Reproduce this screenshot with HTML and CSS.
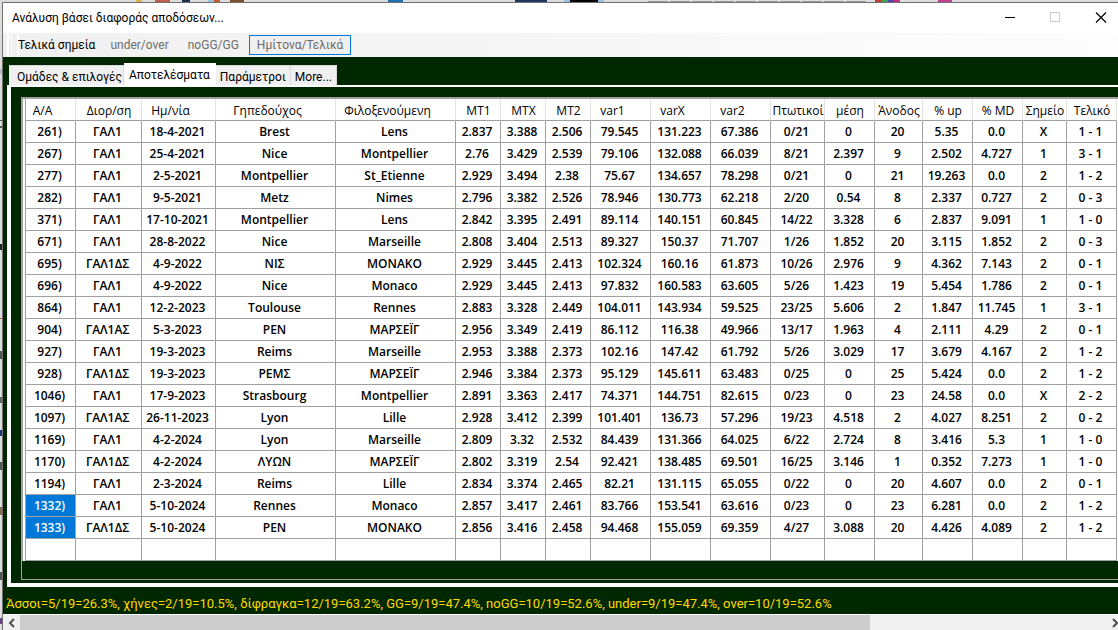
FILE: index.html
```html
<!DOCTYPE html>
<html lang="el">
<head>
<meta charset="utf-8">
<title>Ανάλυση βάσει διαφοράς αποδόσεων...</title>
<link rel="stylesheet" href="styles.css">
</head>
<body>
<div class="backdrop">
<main class="window">
  <header class="titlebar">
    <h1 class="title">Ανάλυση βάσει διαφοράς αποδόσεων...</h1>
    <div class="controls">
      <button class="control" aria-label="Ελαχιστοποίηση"><svg width="12" height="12" viewBox="0 0 12 12" shape-rendering="crispEdges"><path d="M0 5.500h10" stroke="#000"/></svg></button>
      <button class="control" aria-label="Μεγιστοποίηση" disabled><svg width="12" height="12" viewBox="0 0 12 12" shape-rendering="crispEdges"><path d="M0.500 0.500h9v9h-9z" fill="none" stroke="#ccc"/></svg></button>
      <button class="control" aria-label="Κλείσιμο"><svg width="12" height="12" viewBox="0 0 12 12"><path d="M1 0.500l10 10M11 0.500L1 10.500" stroke="#000" stroke-width="1.200"/></svg></button>
    </div>
  </header>
  <nav class="toolbar">
    <button class="tool tool-ready">Τελικά σημεία</button>
    <button class="tool">under/over</button>
    <button class="tool">noGG/GG</button>
    <button class="tool tool-active">Ημίτονα/Τελικά</button>
  </nav>
  <div class="tabs" role="tablist">
    <button class="tab" role="tab">Ομάδες &amp; επιλογές</button>
    <button class="tab tab-selected" role="tab" aria-selected="true">Αποτελέσματα</button>
    <button class="tab" role="tab">Παράμετροι</button>
    <button class="tab" role="tab">More...</button>
  </div>
  <section class="panel">
    <div class="grid">
      <div class="sheet">
      <table class="results">
        <colgroup><col class="w50"><col class="w66"><col class="w74"><col class="w120" span="2"><col class="w45" span="3"><col class="w60" span="3"><col class="w54"><col class="w50"><col class="w48"><col class="w50" span="2"><col class="w44"><col class="w50"></colgroup>
        <thead>
        <tr><th class="sortable">Α/Α<th>Διορ/ση<th class="sortable">Ημ/νία<th class="sortable">Γηπεδούχος<th class="sortable">Φιλοξενούμενη<th>MT1<th>MTX<th>MT2<th class="sortable">var1<th class="sortable">varX<th class="sortable">var2<th>Πτωτικοί<th>μέση<th>Άνοδος<th>% up<th>% MD<th>Σημείο<th>Τελικό
        </thead>
        <tbody>
        <tr><td>261)<td>ΓΑΛ1<td>18-4-2021<td>Brest<td>Lens<td>2.837<td>3.388<td>2.506<td>79.545<td>131.223<td>67.386<td>0/21<td>0<td>20<td>5.35<td>0.0<td>X<td>1 - 1
        <tr><td>267)<td>ΓΑΛ1<td>25-4-2021<td>Nice<td>Montpellier<td>2.76<td>3.429<td>2.539<td>79.106<td>132.088<td>66.039<td>8/21<td>2.397<td>9<td>2.502<td>4.727<td>1<td>3 - 1
        <tr><td>277)<td>ΓΑΛ1<td>2-5-2021<td>Montpellier<td>St_Etienne<td>2.929<td>3.494<td>2.38<td>75.67<td>134.657<td>78.298<td>0/21<td>0<td>21<td>19.263<td>0.0<td>2<td>1 - 2
        <tr><td>282)<td>ΓΑΛ1<td>9-5-2021<td>Metz<td>Nimes<td>2.796<td>3.382<td>2.526<td>78.946<td>130.773<td>62.218<td>2/20<td>0.54<td>8<td>2.337<td>0.727<td>2<td>0 - 3
        <tr><td>371)<td>ΓΑΛ1<td>17-10-2021<td>Montpellier<td>Lens<td>2.842<td>3.395<td>2.491<td>89.114<td>140.151<td>60.845<td>14/22<td>3.328<td>6<td>2.837<td>9.091<td>1<td>1 - 0
        <tr><td>671)<td>ΓΑΛ1<td>28-8-2022<td>Nice<td>Marseille<td>2.808<td>3.404<td>2.513<td>89.327<td>150.37<td>71.707<td>1/26<td>1.852<td>20<td>3.115<td>1.852<td>2<td>0 - 3
        <tr><td>695)<td>ΓΑΛ1ΔΣ<td>4-9-2022<td>ΝΙΣ<td>ΜΟΝΑΚΟ<td>2.929<td>3.445<td>2.413<td>102.324<td>160.16<td>61.873<td>10/26<td>2.976<td>9<td>4.362<td>7.143<td>2<td>0 - 1
        <tr><td>696)<td>ΓΑΛ1<td>4-9-2022<td>Nice<td>Monaco<td>2.929<td>3.445<td>2.413<td>97.832<td>160.583<td>63.605<td>5/26<td>1.423<td>19<td>5.454<td>1.786<td>2<td>0 - 1
        <tr><td>864)<td>ΓΑΛ1<td>12-2-2023<td>Toulouse<td>Rennes<td>2.883<td>3.328<td>2.449<td>104.011<td>143.934<td>59.525<td>23/25<td>5.606<td>2<td>1.847<td>11.745<td>1<td>3 - 1
        <tr><td>904)<td>ΓΑΛ1ΑΣ<td>5-3-2023<td>ΡΕΝ<td>ΜΑΡΣΕΪΓ<td>2.956<td>3.349<td>2.419<td>86.112<td>116.38<td>49.966<td>13/17<td>1.963<td>4<td>2.111<td>4.29<td>2<td>0 - 1
        <tr><td>927)<td>ΓΑΛ1<td>19-3-2023<td>Reims<td>Marseille<td>2.953<td>3.388<td>2.373<td>102.16<td>147.42<td>61.792<td>5/26<td>3.029<td>17<td>3.679<td>4.167<td>2<td>1 - 2
        <tr><td>928)<td>ΓΑΛ1ΔΣ<td>19-3-2023<td>ΡΕΜΣ<td>ΜΑΡΣΕΪΓ<td>2.946<td>3.384<td>2.373<td>95.129<td>145.611<td>63.483<td>0/25<td>0<td>25<td>5.424<td>0.0<td>2<td>1 - 2
        <tr><td>1046)<td>ΓΑΛ1<td>17-9-2023<td>Strasbourg<td>Montpellier<td>2.891<td>3.363<td>2.417<td>74.371<td>144.751<td>82.615<td>0/23<td>0<td>23<td>24.58<td>0.0<td>X<td>2 - 2
        <tr><td>1097)<td>ΓΑΛ1ΑΣ<td>26-11-2023<td>Lyon<td>Lille<td>2.928<td>3.412<td>2.399<td>101.401<td>136.73<td>57.296<td>19/23<td>4.518<td>2<td>4.027<td>8.251<td>2<td>0 - 2
        <tr><td>1169)<td>ΓΑΛ1<td>4-2-2024<td>Lyon<td>Marseille<td>2.809<td>3.32<td>2.532<td>84.439<td>131.366<td>64.025<td>6/22<td>2.724<td>8<td>3.416<td>5.3<td>1<td>1 - 0
        <tr><td>1170)<td>ΓΑΛ1ΔΣ<td>4-2-2024<td>ΛΥΩΝ<td>ΜΑΡΣΕΪΓ<td>2.802<td>3.319<td>2.54<td>92.421<td>138.485<td>69.501<td>16/25<td>3.146<td>1<td>0.352<td>7.273<td>1<td>1 - 0
        <tr><td>1194)<td>ΓΑΛ1<td>2-3-2024<td>Reims<td>Lille<td>2.834<td>3.374<td>2.465<td>82.21<td>131.115<td>65.055<td>0/22<td>0<td>20<td>4.607<td>0.0<td>2<td>0 - 1
        <tr><td class="picked">1332)<td>ΓΑΛ1<td>5-10-2024<td>Rennes<td>Monaco<td>2.857<td>3.417<td>2.461<td>83.766<td>153.541<td>63.616<td>0/23<td>0<td>23<td>6.281<td>0.0<td>2<td>1 - 2
        <tr><td class="picked">1333)<td>ΓΑΛ1ΔΣ<td>5-10-2024<td>ΡΕΝ<td>ΜΟΝΑΚΟ<td>2.856<td>3.416<td>2.458<td>94.468<td>155.059<td>69.359<td>4/27<td>3.088<td>20<td>4.426<td>4.089<td>2<td>1 - 2
        <tr><td><td><td><td><td><td> <td><td><td><td><td><td> <td><td><td><td><td><td>
        </tbody>
      </table>
      </div>
    </div>
  </section>
  <p class="summary">Άσσοι=5/19=26.3%, χήνες=2/19=10.5%, δίφραγκα=12/19=63.2%, GG=9/19=47.4%, noGG=10/19=52.6%, under=9/19=47.4%, over=10/19=52.6%</p>
  <div class="scrollbar">
    <button class="arrow" aria-label="Κύλιση αριστερά"><svg width="8" height="10" viewBox="0 0 8 10"><path d="M6 1L2 5l4 4" fill="none" stroke="#505050" stroke-width="2"/></svg></button>
    <div class="track"><div class="thumb"></div></div>
    <button class="arrow arrow-right" aria-label="Κύλιση δεξιά"><svg width="8" height="10" viewBox="0 0 8 10"><path d="M3 1l4 4-4 4" fill="none" stroke="#505050" stroke-width="2"/></svg></button>
  </div>
</main>
</div>
</body>
</html>
```
FILE: styles.css
```css
* { box-sizing: border-box; }

body {
  margin: 0;
  font-family: "Open Sans", "Noto Sans", sans-serif;
  font-size: 12px;
  color: #000;
}

button {
  margin: 0;
  padding: 0;
  border: 0;
  background: none;
  font: inherit;
  color: inherit;
  white-space: nowrap;
}

svg { display: block; }

.backdrop {
  display: flex;
  min-height: 100vh;
  padding: 2px 0 0 2px;
  overflow: hidden;
  background:
    linear-gradient(90deg, transparent 136px, #d8b84a 136px 142px, transparent 142px 155px, #c06048 155px 170px, transparent 170px 182px, #1f3050 182px 190px, transparent 190px 208px, #9cc0e0 208px 214px, #c85a30 214px 220px, transparent 220px 230px, #7a5030 230px 244px, transparent 244px 388px, #2070b0 388px 403px, transparent 403px 515px, #203860 515px 547px, transparent 547px 564px, #9cc0e0 564px 570px, #000 570px 598px, #9cc0e0 598px 604px, transparent 604px 875px, #c04030 875px 882px, #40a050 882px 888px, #5040b0 888px 894px, #c03080 894px 900px, transparent 900px 938px, #c04090 938px 952px, transparent 952px) top / 100% 2px no-repeat,
    repeating-linear-gradient(90deg, #999 0 20px, #dcdcdc 20px 22px) 648px 1px / 218px 1px no-repeat,
    linear-gradient(transparent 69px, #b4bcc8 69px 74px, transparent 74px 120px, #555 120px 121px, transparent 121px 126px, #555 126px 128px, transparent 128px 244px, #222 244px 250px, transparent 250px 318px, #a06030 318px 319px, transparent 319px 351px, #555 351px 359px, transparent 359px 397px, #666 397px 403px, transparent 403px 430px, #203880 430px 436px, transparent 436px 462px, #555 462px 470px, transparent 470px 507px, #8a6a50 507px 515px, transparent 515px 572px, #555 572px 580px, transparent 580px 618px, #704090 618px 624px, transparent 624px) left / 2px 100% no-repeat,
    #dcdcdc;
}

.window {
  flex: 1;
  min-width: 0;
  display: flex;
  flex-direction: column;
  border-top: 1px solid #707070;
  border-left: 1px solid #707070;
  background: #002800;
}

.titlebar {
  display: flex;
  align-items: center;
  justify-content: space-between;
  height: 30px;
  padding-left: 9px;
  background: #fff;
}

.title {
  margin: 0;
  font: 400 12px/28px Roboto, sans-serif;
}

.controls {
  display: flex;
  gap: 11px;
}

.control {
  display: flex;
  align-items: center;
  justify-content: center;
  width: 34px;
  height: 28px;
}

.toolbar {
  display: flex;
  align-items: center;
  gap: 1px;
  height: 24px;
  padding-left: 6px;
  background:
    linear-gradient(90deg, transparent 4px, #fff 4px 6px, transparent 6px 8px, #fff 8px 9px, transparent 9px 14px, #fff 14px 16px, transparent 16px),
    linear-gradient(90deg, #f0f0f0, #fdfdfd);
}

.tool {
  height: 20px;
  padding: 0 8px;
  border: 1px solid transparent;
  font: 12px/18px Roboto, sans-serif;
  color: #6d6d6d;
}

.tool-ready {
  padding-right: 4px;
  color: #000;
}

.tool-active {
  padding: 0 7px;
  border-color: #0078d7;
  background: #f0f0f0;
}

.tabs {
  display: flex;
  align-items: flex-end;
  height: 28px;
  padding: 6px 0 0 6px;
}

.tab {
  height: 20px;
  padding: 0 4px;
  border: 1px solid #d9d9d9;
  border-bottom: 0;
  border-left: 0;
  background: #f0f0f0;
  font: 12px/22px Roboto, sans-serif;
}

.tab:first-child { padding: 0 1px 0 8px; }

.tab-selected {
  height: 22px;
  padding: 0 5px;
  border-color: #fff;
  background: #fff;
}

.panel {
  margin-left: 4px;
  padding: 10px 0 3px 10px;
  border: solid #fff;
  border-width: 2px 0 4px 4px;
}

.grid {
  min-height: 483px;
  border: 1px solid #a0a0a0;
  border-right: 0;
}

.sheet {
  padding-left: 2px;
  border: solid #a0a0a0;
  border-width: 1px 0 0 1px;
  background: #fff;
}

.results {
  width: 1092px;
  table-layout: fixed;
  border-collapse: separate;
  border-spacing: 0;
  border-left: 1px solid #a0a0a0;
}

.w44 { width: 44px; }
.w45 { width: 45px; }
.w48 { width: 48px; }
.w50 { width: 50px; }
.w54 { width: 54px; }
.w60 { width: 60px; }
.w66 { width: 66px; }
.w74 { width: 74px; }
.w120 { width: 120px; }

.results th,
.results td {
  height: 22px;
  padding: 0 2px 0 0;
  border-right: 1px solid #a0a0a0;
  border-bottom: 1px solid #a0a0a0;
  line-height: 20px;
  text-align: center;
  white-space: nowrap;
}

.results th {
  padding: 2px 0 0 1px;
  border-right-color: #e3e3e3;
  font-weight: 400;
  line-height: 19px;
}

.results td { font-weight: 600; }

.results .sortable { padding-right: 17px; }

.results .picked {
  background: #0078d7;
  color: #fff;
}

.summary {
  margin: 0;
  padding: 7px 3px 0;
  height: 27px;
  font: 13px/20px Roboto, sans-serif;
  color: #ffd800;
  white-space: nowrap;
}

.scrollbar {
  display: flex;
  flex: 1;
  height: 16px;
  border-top: 1px solid #fff;
  background: #f0f0f0;
}

.arrow {
  display: flex;
  align-items: center;
  justify-content: center;
  width: 17px;
}

.arrow-right {
  width: 8px;
}

.track {
  flex: 1;
  display: flex;
}

.thumb {
  width: 78%;
  background: #cdcdcd;
}
```
